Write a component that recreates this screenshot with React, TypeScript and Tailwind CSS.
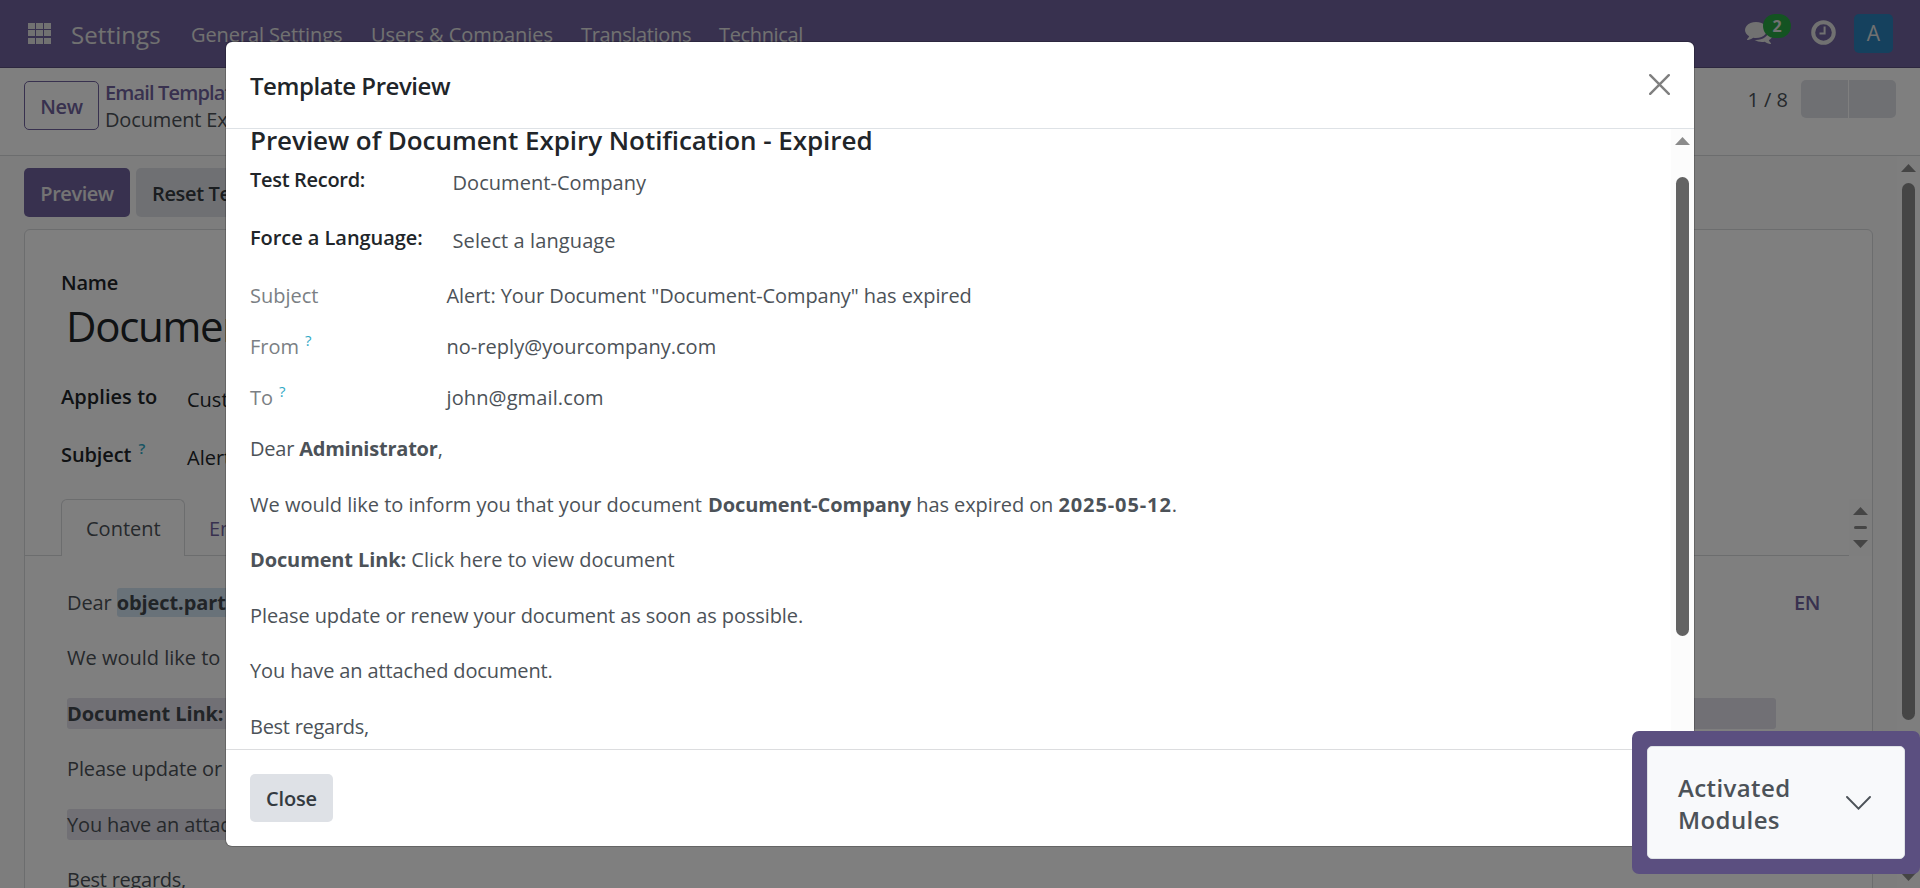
import React from "react";

function Triangle({ down = false, className = "" }: { down?: boolean; className?: string }) {
  return (
    <svg width="15" height="8" viewBox="0 0 15 8" className={className} aria-hidden="true">
      <path d={down ? "M0 0h15L7.5 8z" : "M0 8h15L7.5 0z"} fill="currentColor" />
    </svg>
  );
}

function AppsIcon() {
  const cells = [0, 8, 16];
  return (
    <svg width="23" height="21" viewBox="0 0 23 21" aria-hidden="true">
      {cells.map((x) =>
        [0, 7, 15].map((y) => <rect key={`${x}-${y}`} x={x} y={y} width="7" height="6" fill="currentColor" />),
      )}
    </svg>
  );
}

function CommentsIcon() {
  return (
    <svg width="28" height="28" viewBox="0 0 1792 1792" fill="currentColor" aria-hidden="true">
      <path d="M1408 768q0 139-94 257t-256.5 186.500-353.500 68.500q-86 0-176-16-124 88-278 128-36 9-86 16h-3q-11 0-20.500-8t-11.500-21q-1-3-1-6.500t.5-6.500 2-6l2.500-5 3.500-5.500 4-5 4.500-5 4-4.500q5-6 23-25t26-29.500 22.500-29 25-38.500 20.500-44q-124-72-195-177t-71-224q0-139 94-257t256.500-186.500 353.500-68.500 353.500 68.500 256.500 186.500 94 257zm384 256q0 120-71 224.500t-195 176.500q10 24 20.500 44t25 38.500 22.500 29 26 29.500 23 25q1 1 4 4.500t4.500 5 4 5 3.500 5.500l2.500 5 2 6 .5 6.500-1 6.500q-3 14-13 22t-22 7q-50-7-86-16-154-40-278-128-90 16-176 16-271 0-472-132 58 4 88 4 161 0 309-45t264-129q125-92 192-212t67-254q0-77-23-152 129 71 204 178t75 230z" />
    </svg>
  );
}

function ClockIcon() {
  return (
    <svg width="25" height="25" viewBox="0 0 25 25" fill="none" stroke="currentColor" aria-hidden="true">
      <circle cx="12.5" cy="12.5" r="10.3" strokeWidth="4" />
      <path d="M13.6 6.5v7H8.5" strokeWidth="2" />
    </svg>
  );
}

function Help({ className = "" }: { className?: string }) {
  return <sup className={`top-0 self-start text-[15px] leading-[16px] text-[#2fa9c6] ${className}`}>?</sup>;
}

function Navbar() {
  return (
    <header className="flex h-[68px] shrink-0 items-start border-b border-[#5a4f7f] bg-[#71639e] pl-7 pr-[27px] text-[#e2e2e2]">
      <div className="mt-[23px] mr-[20px]">
        <AppsIcon />
      </div>
      <span className="mt-[19px] w-[120px] text-[24px] leading-8 tracking-[0.1px]">Settings</span>
      <nav className="mt-[20px] flex leading-[30px] whitespace-nowrap">
        <span className="w-[180px] tracking-[-0.1px]">General Settings</span>
        <span className="w-[210px] tracking-[-0.03px]">Users &amp; Companies</span>
        <span className="w-[138px] tracking-[-0.35px]">Translations</span>
        <span className="tracking-[-0.35px]">Technical</span>
      </nav>
      <div className="ml-auto flex items-start">
        <div className="relative mt-[18px] mr-[38px]">
          <CommentsIcon />
          <span className="absolute -top-[4px] left-[18px] flex h-[24px] w-[28px] items-center justify-center rounded-full bg-[#28a745] text-[16px] font-bold">
            2
          </span>
        </div>
        <div className="mt-[20px] mr-[18px]">
          <ClockIcon />
        </div>
        <div className="mt-[14px] flex h-[39px] w-[39px] items-center justify-center rounded-[5px] bg-[#2a82bc] text-[21px]">
          A
        </div>
      </div>
    </header>
  );
}

function ControlPanel() {
  return (
    <div className="flex h-[88px] shrink-0 items-start border-b border-[#d8dadd] bg-white pl-6 pr-6">
      <button className="mt-[13px] flex h-[49px] w-[75px] items-center justify-center rounded-[5px] border border-[#71639e] pt-[2px] font-semibold tracking-[-0.3px] text-[#71639e]">
        New
      </button>
      <div className="mt-[11px] ml-[6px] flex flex-col leading-[27px] whitespace-nowrap">
        <span className="font-semibold tracking-[-0.85px] text-[#71639e]">Email Templates</span>
        <span className="tracking-[-0.15px] text-[#4c5258]">Document Expiry Notification - Expired</span>
      </div>
      <div className="mt-[12px] ml-auto flex items-center gap-[13px] text-[#4c5258]">
        <span className="pt-[2px]">1 / 8</span>
        <div className="flex gap-px">
          <span className="h-[38px] w-[47px] rounded-l-[5px] bg-[#dee1e6]" />
          <span className="h-[38px] w-[47px] rounded-r-[5px] bg-[#dee1e6]" />
        </div>
      </div>
    </div>
  );
}

function TemplateBody() {
  return (
    <div className="flex-1 overflow-hidden pt-[31px] pl-[42px] pr-[96px] leading-[31.4px] whitespace-nowrap text-[#4c5258]">
      <div className="mb-6 flex">
        <p className="tracking-[-0.1px]">
          Dear{" "}
          <b className="rounded-[3px] bg-[#d3e4f3] py-px text-[#43494f]">object.partner_id.name</b>
        </p>
        <span className="ml-auto mr-[-44px] font-semibold tracking-[-0.4px] text-[#71639e]">EN</span>
      </div>
      <p className="mb-6">We would like to inform you that your document</p>
      <p className="mb-6 h-[31.4px] w-[1709px] rounded-[3px] bg-[#e2e1ea]">
        <b className="tracking-[-0.1px] text-[#43494f]">Document Link:</b>
      </p>
      <p className="mb-6 tracking-[-0.12px]">Please update or renew your document as soon as possible.</p>
      <p className="mb-6 w-[1709px] rounded-[3px] bg-[#e2e1ea] tracking-[-0.15px]">You have an attached document.</p>
      <p className="tracking-[-0.27px]">Best regards,</p>
    </div>
  );
}

function FormSheet() {
  return (
    <section className="flex h-[680px] w-[1849px] flex-col rounded-[6px] border border-[#d8dadd] bg-white">
      <div className="flex h-[269px] shrink-0 flex-col pt-[38px] pl-9 leading-[30px] text-[#212529]">
        <span className="h-[28px] font-semibold tracking-[-0.2px]">Name</span>
        <span className="ml-[5px] text-[42px] leading-[60px] tracking-[-1.3px] whitespace-nowrap">Document Expiry</span>
        <div className="mt-[26px] flex h-[58px]">
          <span className="w-[126px] font-semibold tracking-[0.05px]">Applies to</span>
          <span className="pt-[3px]">Custom Document</span>
        </div>
        <div className="flex">
          <span className="flex w-[126px] font-semibold tracking-[-0.1px]">
            Subject
            <Help className="ml-[7px]" />
          </span>
          <span className="pt-[3px]">Alert: Your Document</span>
        </div>
      </div>
      <div className="flex h-[57px] shrink-0 items-stretch">
        <span className="w-9 border-b border-[#d8dadd]" />
        <span className="w-[124px] rounded-t-[6px] border border-b-0 border-[#d8dadd] pt-[14px] pl-6 leading-[30px] text-[#4c5258]">
          Content
        </span>
        <span className="flex-1 border-b border-[#d8dadd] pt-[15px] pl-[24px] leading-[30px] text-[#71639e]">
          Email Configuration
        </span>
        <span className="flex w-[23px] flex-col items-center bg-[#fcfcfc] pt-[8px] text-[#8b8b8b]">
          <Triangle />
          <span className="mt-[11px] h-[3px] w-[13px] rounded-full bg-[#8b8b8b]" />
          <Triangle down className="mt-[11px]" />
        </span>
      </div>
      <TemplateBody />
    </section>
  );
}

function FormView() {
  return (
    <div className="flex flex-1 overflow-hidden bg-[#fafafb]">
      <main className="flex flex-1 flex-col pt-3 pl-6">
        <div className="mb-[12px] flex h-[49px] shrink-0 gap-[6px] font-semibold">
          <button className="flex w-[106px] items-center justify-center rounded-[5px] bg-[#71639e] pt-[2px] tracking-[-0.45px] text-[#e8e8e8]">
            Preview
          </button>
          <button className="flex w-[180px] items-center rounded-[5px] bg-[#dee1e6] pt-[2px] pl-[16px] tracking-[-0.35px] whitespace-nowrap text-[#343a40]">
            Reset Template
          </button>
        </div>
        <FormSheet />
      </main>
      <div className="flex w-[23px] flex-col items-center bg-[#fcfcfc] pt-[8px] text-[#8b8b8b]">
        <Triangle className="shrink-0" />
        <span className="mt-[11px] h-[537px] w-[13px] shrink-0 rounded-full bg-[#8b8b8b]" />
        <Triangle down className="mt-[153px] shrink-0" />
      </div>
    </div>
  );
}

function Row({ label, help, children }: { label: string; help?: boolean; children: React.ReactNode }) {
  return (
    <div className="flex h-[51px]">
      <span className="flex w-[196.5px] text-[#7b7f84]">
        {label}
        {help && <Help className="ml-[6px]" />}
      </span>
      <span className="tracking-[0.03px]">{children}</span>
    </div>
  );
}

function PreviewDialog() {
  return (
    <div
      role="dialog"
      className="absolute top-[42px] left-[226px] flex h-[804px] w-[1468px] flex-col rounded-[6px] bg-white text-[#4c5258] shadow-[0_0_0_1px_rgba(0,0,0,0.2)]"
    >
      <div className="flex h-[87px] shrink-0 items-start justify-between border-b border-[#dee2e6] pl-6 pr-6">
        <h4 className="mt-[28px] text-[24px] leading-8 font-semibold tracking-[-0.45px] text-[#212529]">Template Preview</h4>
        <svg width="21" height="21" viewBox="0 0 21 21" className="mt-[32px]" stroke="#7f7f7f" strokeWidth="2.4" strokeLinecap="round" aria-hidden="true">
          <path d="M1.2 1.2l18.6 18.6M19.8 1.2L1.2 19.8" />
        </svg>
      </div>
      <div className="flex h-[620px] shrink-0 overflow-hidden">
        <div className="flex-1 pl-6 leading-[30px]">
          <h3 className="-mt-[7px] text-[26px] leading-[36px] font-semibold tracking-[-0.05px] text-[#212529]">
            Preview of Document Expiry Notification - Expired
          </h3>
          <div className="mt-[7px] flex h-[58px]">
            <span className="w-[202.5px] font-semibold tracking-[-0.31px] text-[#212529]">Test Record:</span>
            <span className="pt-[3px] tracking-[0.05px]">Document-Company</span>
          </div>
          <div className="flex h-[58px]">
            <span className="w-[202.5px] font-semibold tracking-[-0.05px] text-[#212529]">Force a Language:</span>
            <span className="pt-[3px] tracking-[0.1px]">Select a language</span>
          </div>
          <Row label="Subject">
            <span className="tracking-[-0.07px]">Alert: Your Document "Document-Company" has expired</span>
          </Row>
          <Row label="From" help>
            no-reply@yourcompany.com
          </Row>
          <Row label="To" help>
            <span className="tracking-[0.12px]">john@gmail.com</span>
          </Row>
          <div className="-mt-px leading-[31.5px]">
            <p className="mb-6 tracking-[-0.22px]">
              Dear <b>Administrator</b>,
            </p>
            <p className="mb-6">
              We would like to inform you that your document{" "}
              <b className="ml-px tracking-[-0.08px]">Document-Company</b>
              <span className="tracking-[-0.08px]"> has expired on </span>
              <b className="tracking-[0.9px]">2025-05-12</b>.
            </p>
            <p className="mb-6">
              <b className="tracking-[-0.12px]">Document Link:</b>{" "}
              <span className="tracking-[0.03px]">Click here to view document</span>
            </p>
            <p className="mb-6 tracking-[-0.1px]">Please update or renew your document as soon as possible.</p>
            <p className="mb-6 tracking-[-0.13px]">You have an attached document.</p>
            <p className="tracking-[-0.27px]">Best regards,</p>
          </div>
        </div>
        <div className="flex w-[23px] flex-col items-center bg-[#fcfcfc] pt-[8px] text-[#8b8b8b]">
          <Triangle className="shrink-0" />
          <span className="mt-[32px] h-[459px] w-[13px] shrink-0 rounded-full bg-[#636363]" />
        </div>
      </div>
      <div className="flex flex-1 items-start border-t border-[#dcdddf] pt-[24px] pl-6">
        <button className="flex h-[48px] w-[83px] items-center justify-center rounded-[5px] bg-[#dee1e6] pt-[2px] font-semibold tracking-[-0.14px] text-[#343a40]">
          Close
        </button>
      </div>
    </div>
  );
}

function ModulesPanel() {
  return (
    <div className="absolute top-[731px] left-[1632px] h-[143px] w-[288px] rounded-[7px] bg-[#5b4f80] p-[15px]">
      <div className="flex h-[113px] w-[258px] items-center justify-between rounded-[5px] border border-[#dee2e6] bg-[#f8f9fb] pl-[30px] pr-[33px] text-[#4c5258]">
        <h4 className="w-[120px] pt-[2px] text-[24px] leading-[32px] font-semibold tracking-[0.4px]">
          Activated Modules
        </h4>
        <svg width="25" height="14" viewBox="0 0 25 14" fill="none" stroke="currentColor" strokeWidth="1.9" strokeLinecap="round" aria-hidden="true">
          <path d="M1 1l11.5 11.7L24 1" />
        </svg>
      </div>
    </div>
  );
}

export default function App() {
  return (
    <div className="relative flex h-[888px] w-[1920px] flex-col overflow-hidden font-['Open_Sans','Noto_Sans',sans-serif] text-[20px]">
      <Navbar />
      <ControlPanel />
      <FormView />
      <div className="absolute inset-0 bg-black/50" />
      <PreviewDialog />
      <ModulesPanel />
    </div>
  );
}
